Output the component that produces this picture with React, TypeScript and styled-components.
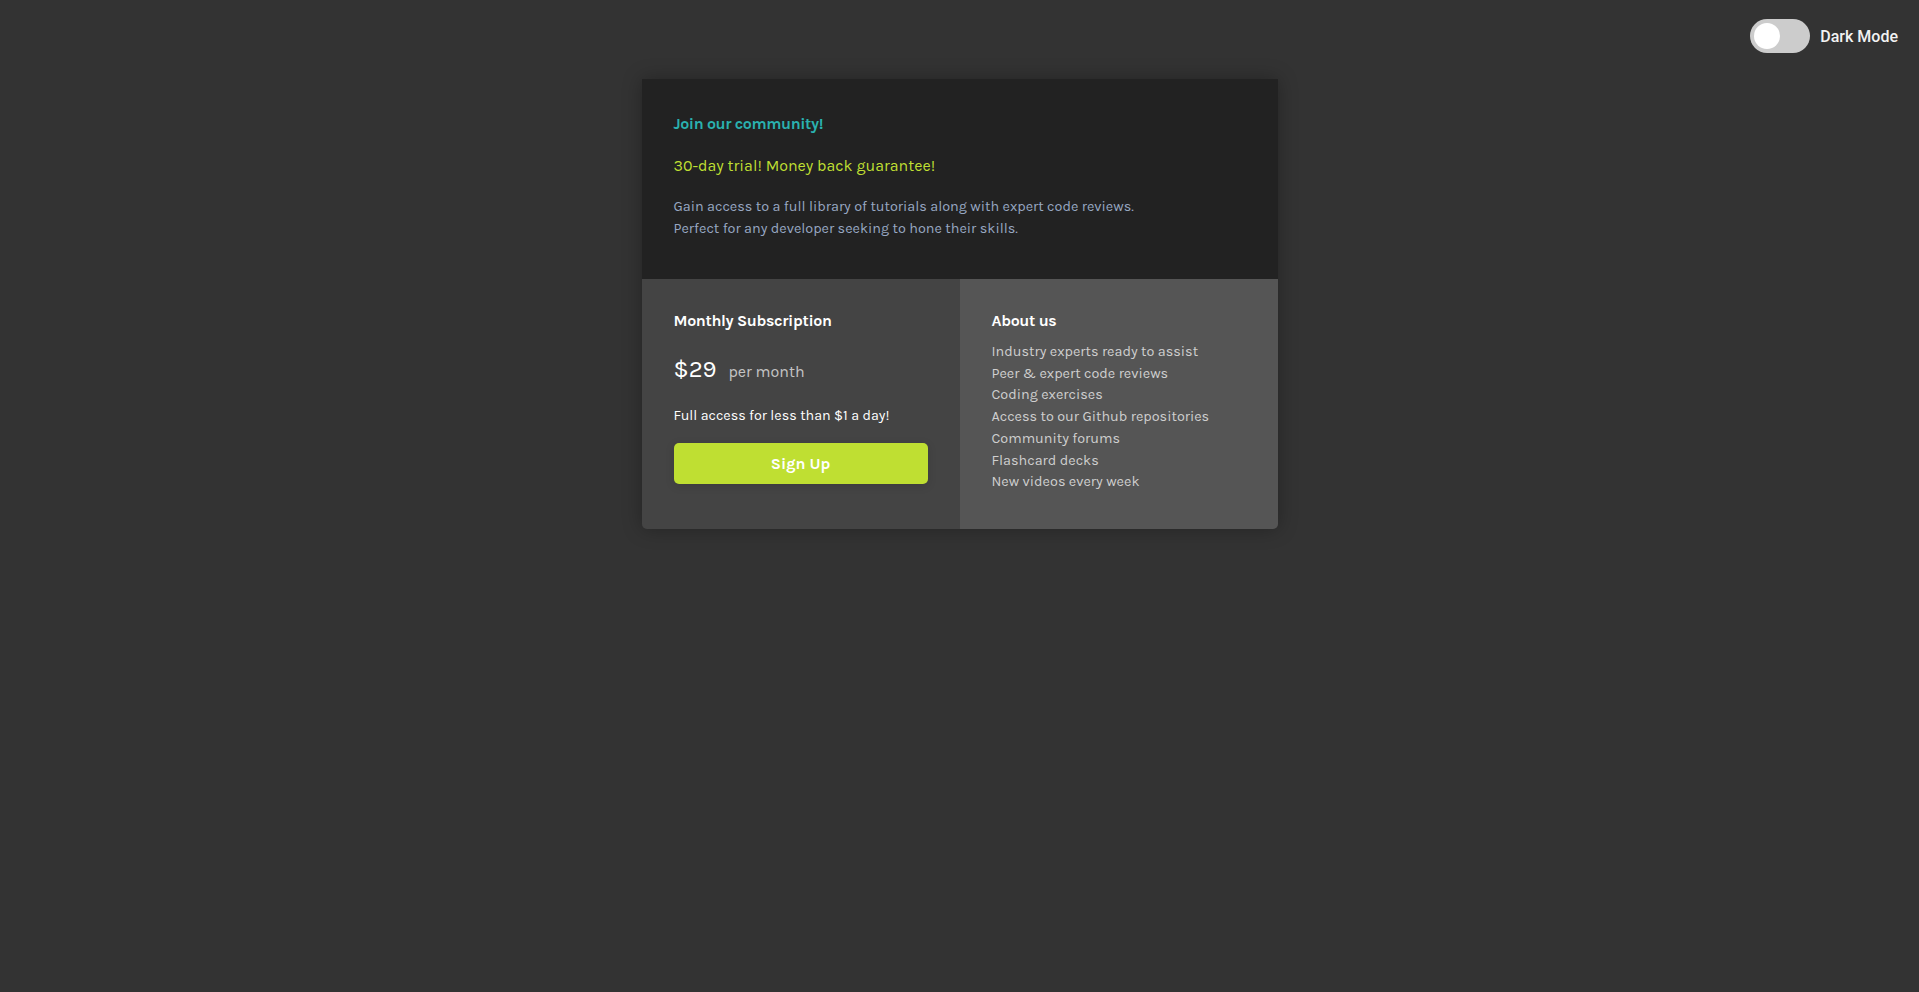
import React, { useState } from "react";
import styled, { createGlobalStyle } from "styled-components";

const GlobalStyle = createGlobalStyle`
  html, body {
    margin: 0;
    padding: 0;
    background: #333333;
  }
  body {
    font-family: "Karla", "Lato", "Noto Sans", sans-serif;
    -webkit-font-smoothing: antialiased;
  }
  * { box-sizing: border-box; }
`;

const Page = styled.div`
  min-height: 992px;
  background: #333333;
  display: flex;
  flex-direction: column;
`;

const TopBar = styled.div`
  display: flex;
  justify-content: flex-end;
  align-items: center;
  padding: 19px 21px 0 0;
  gap: 10px;
`;

const Switch = styled.button<{ $on: boolean }>`
  width: 60px;
  height: 34px;
  border-radius: 17px;
  border: none;
  padding: 4px;
  background: ${(p) => (p.$on ? "#2ab1af" : "#cccccc")};
  display: flex;
  justify-content: ${(p) => (p.$on ? "flex-end" : "flex-start")};
  align-items: center;
  cursor: pointer;
`;

const Knob = styled.span`
  width: 26px;
  height: 26px;
  border-radius: 50%;
  background: #ffffff;
`;

const SwitchLabel = styled.span`
  font-family: "Roboto", "Liberation Sans", sans-serif;
  font-size: 16px;
  font-weight: 500;
  color: #f2f2f2;
`;

const Card = styled.main`
  width: 636px;
  margin: 26px auto 0;
  border-radius: 0 0 5px 5px;
  overflow: hidden;
  box-shadow: 0 0 20px rgba(0, 0, 0, 0.3);
`;

const Hero = styled.section`
  background: #222222;
  padding: 33px 32px 39px;
`;

const Title = styled.h1`
  margin: 0;
  font-size: 16px;
  line-height: 24px;
  font-weight: 700;
  letter-spacing: -0.4px;
  color: #2ab1af;
`;

const Trial = styled.p`
  margin: 18px 0 0;
  font-size: 16px;
  line-height: 24px;
  color: #bfdf32;
`;

const Desc = styled.p`
  margin: 18px 0 0;
  font-size: 14.4px;
  line-height: 22px;
  color: #98a8c2;
`;

const Bottom = styled.div`
  display: grid;
  grid-template-columns: 1fr 1fr;
`;

const Column = styled.section<{ $tone: string; $padBottom: number }>`
  background: ${(p) => p.$tone};
  padding: 30px 32px ${(p) => p.$padBottom}px;
`;

const ColTitle = styled.h2`
  margin: 0;
  font-size: 16px;
  line-height: 24px;
  font-weight: 700;
  letter-spacing: -0.35px;
  color: #ffffff;
`;

const PriceRow = styled.div`
  margin-top: 20px;
  height: 32px;
  display: flex;
  align-items: baseline;
  gap: 12px;
`;

const Price = styled.span`
  font-size: 24px;
  line-height: 32px;
  color: #ffffff;
`;

const Per = styled.span`
  font-size: 16px;
  line-height: 32px;
  color: #c4c4c4;
`;

const Note = styled.p`
  margin: 21px 0 0;
  font-size: 14.3px;
  line-height: 20px;
  color: #ffffff;
`;

const SignUp = styled.button`
  display: block;
  margin-top: 17px;
  width: 254px;
  height: 41px;
  border: none;
  border-radius: 5px;
  background: #bfdf32;
  color: #ffffff;
  font-family: inherit;
  font-size: 16px;
  font-weight: 700;
  cursor: pointer;
  box-shadow: 0 2px 10px rgba(0, 0, 0, 0.12);
`;

const List = styled.ul`
  list-style: none;
  margin: 8px 0 0;
  padding: 0;
`;

const Item = styled.li`
  font-size: 14.4px;
  line-height: 21.7px;
  color: #cfcfcf;
`;

const features = [
  "Industry experts ready to assist",
  "Peer & expert code reviews",
  "Coding exercises",
  "Access to our Github repositories",
  "Community forums",
  "Flashcard decks",
  "New videos every week",
];

export default function App() {
  const [dark, setDark] = useState(false);
  return (
    <>
      <GlobalStyle />
      <Page>
        <TopBar>
          <Switch $on={dark} onClick={() => setDark(!dark)} aria-label="Dark Mode">
            <Knob />
          </Switch>
          <SwitchLabel>Dark Mode</SwitchLabel>
        </TopBar>
        <Card>
          <Hero>
            <Title>Join our community!</Title>
            <Trial>30-day trial! Money back guarantee!</Trial>
            <Desc>
              Gain access to a full library of tutorials along with expert code reviews.
              <br />
              Perfect for any developer seeking to hone their skills.
            </Desc>
          </Hero>
          <Bottom>
            <Column $tone="#444444" $padBottom={45}>
              <ColTitle>Monthly Subscription</ColTitle>
              <PriceRow>
                <Price>$29</Price>
                <Per>per month</Per>
              </PriceRow>
              <Note>Full access for less than $1 a day!</Note>
              <SignUp>Sign Up</SignUp>
            </Column>
            <Column $tone="#555555" $padBottom={30}>
              <ColTitle>About us</ColTitle>
              <List>
                {features.map((f) => (
                  <Item key={f}>{f}</Item>
                ))}
              </List>
            </Column>
          </Bottom>
        </Card>
      </Page>
    </>
  );
}
